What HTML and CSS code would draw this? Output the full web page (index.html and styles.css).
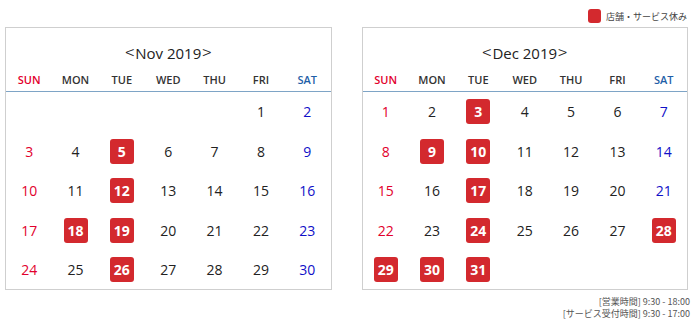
FILE: index.html
```html
<!DOCTYPE html>
<html lang="ja">
<head>
<meta charset="utf-8">
<link rel="stylesheet" href="styles.css">
</head>
<body>
<div class="page">
  <div class="legend"><span class="legend-swatch"></span><span class="legend-text">店舗・サービス休み</span></div>
  <div class="calendars">
    <div class="cal">
      <div class="cal-title"><span class="arrow">&lt;</span>Nov 2019<span class="arrow">&gt;</span></div>
      <div class="cal-head">
        <span class="sun">SUN</span><span>MON</span><span>TUE</span><span>WED</span><span>THU</span><span>FRI</span><span class="sat">SAT</span>
      </div>
      <div class="cal-body">
        <span></span><span></span><span></span><span></span><span></span><span>1</span><span class="sat">2</span>
        <span class="sun">3</span><span>4</span><span><b class="off">5</b></span><span>6</span><span>7</span><span>8</span><span class="sat">9</span>
        <span class="sun">10</span><span>11</span><span><b class="off">12</b></span><span>13</span><span>14</span><span>15</span><span class="sat">16</span>
        <span class="sun">17</span><span><b class="off">18</b></span><span><b class="off">19</b></span><span>20</span><span>21</span><span>22</span><span class="sat">23</span>
        <span class="sun">24</span><span>25</span><span><b class="off">26</b></span><span>27</span><span>28</span><span>29</span><span class="sat">30</span>
      </div>
    </div>
    <div class="cal">
      <div class="cal-title"><span class="arrow">&lt;</span>Dec 2019<span class="arrow">&gt;</span></div>
      <div class="cal-head">
        <span class="sun">SUN</span><span>MON</span><span>TUE</span><span>WED</span><span>THU</span><span>FRI</span><span class="sat">SAT</span>
      </div>
      <div class="cal-body">
        <span class="sun">1</span><span>2</span><span><b class="off">3</b></span><span>4</span><span>5</span><span>6</span><span class="sat">7</span>
        <span class="sun">8</span><span><b class="off">9</b></span><span><b class="off">10</b></span><span>11</span><span>12</span><span>13</span><span class="sat">14</span>
        <span class="sun">15</span><span>16</span><span><b class="off">17</b></span><span>18</span><span>19</span><span>20</span><span class="sat">21</span>
        <span class="sun">22</span><span>23</span><span><b class="off">24</b></span><span>25</span><span>26</span><span>27</span><span><b class="off">28</b></span>
        <span><b class="off">29</b></span><span><b class="off">30</b></span><span><b class="off">31</b></span><span></span><span></span><span></span><span></span>
      </div>
    </div>
  </div>
  <div class="hours">
    <div>[営業時間] 9:30 - 18:00</div>
    <div>[サービス受付時間] 9:30 - 17:00</div>
  </div>
</div>
</body>
</html>
```
FILE: styles.css
```css
html, body {
  margin: 0;
  padding: 0;
  background: #fff;
}
body {
  font-family: "Open Sans", "Noto Sans", "Noto Sans CJK JP", sans-serif;
  color: #222;
}
.page {
  width: 700px;
  height: 331px;
  padding: 9px 12px 0 5px;
  box-sizing: border-box;
}
.legend {
  display: flex;
  justify-content: flex-end;
  align-items: center;
  gap: 5px;
  height: 14px;
  margin-right: 1px;
}
.legend-swatch {
  width: 13px;
  height: 14px;
  background: #d3292e;
  border-radius: 3px;
}
.legend-text {
  font-size: 9px;
  color: #444;
  font-family: "Noto Sans CJK JP", sans-serif;
}
.calendars {
  display: flex;
  gap: 30px;
  margin-top: 4px;
}
.cal {
  width: 327px;
  height: 263px;
  border: 1px solid #cfcfcf;
  box-sizing: border-box;
}
.cal-title {
  text-align: center;
  font-size: 15px;
  font-weight: 500;
  height: 18px;
  line-height: 18px;
  margin-top: 15px;
  color: #222;
}
.arrow {
  font-family: "Noto Sans CJK JP", sans-serif;
  font-size: 17px;
  font-weight: 300;
  margin: 0 1px;
}
.cal-head {
  display: grid;
  grid-template-columns: repeat(7, 1fr);
  margin-top: 12px;
  height: 19px;
  line-height: 14px;
  border-bottom: 1px solid #7ea4c6;
  box-sizing: border-box;
  font-size: 11px;
  font-weight: 600;
  text-align: center;
  color: #333;
}
.cal-body {
  display: grid;
  grid-template-columns: repeat(7, 1fr);
  grid-auto-rows: 39.5px;
  font-size: 14px;
  font-weight: 500;
  text-align: center;
  color: #222;
}
.cal-body span {
  display: flex;
  align-items: center;
  justify-content: center;
}
.cal-head .sun { color: #e2002d; }
.cal-head .sat { color: #1f5fa8; }
.cal-body .sun { color: #e2002d; }
.cal-body .sat { color: #1010c8; }
.off {
  display: flex;
  align-items: center;
  justify-content: center;
  width: 24px;
  height: 25px;
  border-radius: 3px;
  background: #d3292e;
  color: #fff;
  font-weight: 700;
}
.hours {
  text-align: right;
  font-size: 9px;
  color: #555;
  line-height: 12px;
  margin-top: 6px;
  margin-right: -2px;
  font-family: "Noto Sans CJK JP", sans-serif;
}
```
